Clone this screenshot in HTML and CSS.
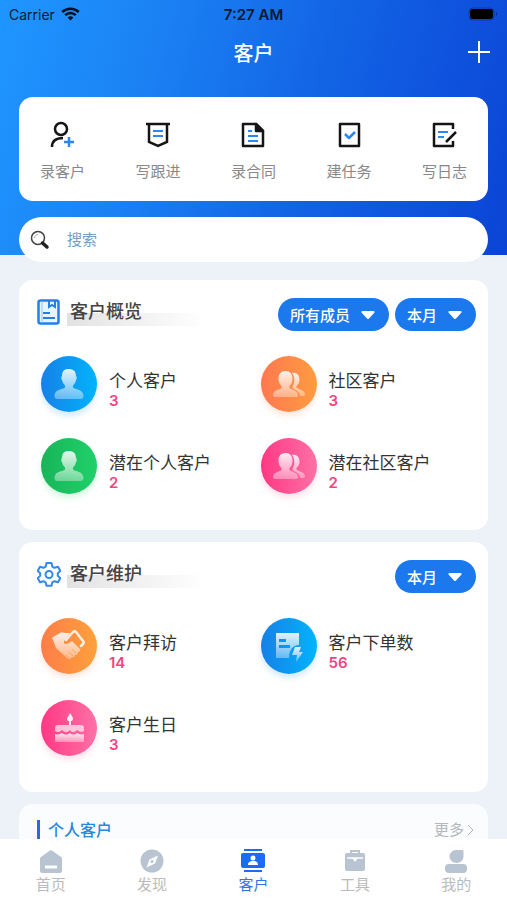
FILE: index.html
```html
<!DOCTYPE html>
<html lang="zh-CN">
<head>
  <meta charset="UTF-8">
  <meta name="viewport" content="width=device-width, initial-scale=1.0">
  <title>客户</title>
  <link rel="stylesheet" href="styles.css">
</head>
<body>
  <!-- shared icon shapes and gradients -->
  <svg class="defs" width="0" height="0" aria-hidden="true">
    <defs>
      <linearGradient id="fade" x1="0" y1="0" x2="0" y2="1">
        <stop offset="0" stop-color="#fff" stop-opacity=".88"/>
        <stop offset="1" stop-color="#fff" stop-opacity=".35"/>
      </linearGradient>
      <symbol id="person" viewBox="0 0 56 56">
        <path fill="url(#fade)" d="M27.500 13c5 0 7.500 2.500 7.500 7 1 .5 1 3.500 0 4-.5 2.500-1.500 4-3 5.500v2c2 2 10.500 1.500 10.500 8.500 0 2-1 3-3 3h-23c-2 0-3-1-3-3 0-7 8.500-6.500 10.500-8.500v-2c-1.500-1.500-2.500-3-3-5.500-1-.5-1-3.500 0-4 0-4.500 2-7 6.500-7z"/>
      </symbol>
      <symbol id="people" viewBox="0 0 56 56">
        <path fill="url(#fade)" d="M24.500 15c4.500 0 7 3 7 7.500 0 3.500-1 5.500-3 7.500v2c2 2 8.500 2 8.500 7 0 1.500-1 2-2 2H14c-1 0-2-.5-2-2 0-5 6.500-5 8.500-7v-2c-2-2-3-4-3-7.500 0-4.500 2.500-7.500 7-7.500z"/>
        <path fill="url(#fade)" d="M31 17c4-1 7.500 1.500 7.500 6.500 0 3-1 4.500-3 6.500v1.500c2 2 8.500 2.500 8.500 6.500 0 1.500-1 2-2 2h-3c0-5-5-6-7.500-8v-1.500c2.500-4 2.500-10-.5-13.500z"/>
      </symbol>
      <symbol id="caret" viewBox="0 0 14 9">
        <path fill="currentColor" d="M1.500 0h11c1 0 1.500 1 .8 1.700L8 7.500c-.6.700-1.400.700-2 0L.7 1.700C0 1 .5 0 1.500 0z"/>
      </symbol>
    </defs>
  </svg>

  <div class="app">
    <main class="content">
      <header class="hero">
        <div class="status-bar">
          <span class="carrier">Carrier
            <svg width="19" height="14" viewBox="0 0 19 14" fill="none" stroke="#0a0f1c" stroke-width="2.500">
              <path d="M1.200 5c4.600-4.400 12-4.400 16.600 0"/>
              <path d="M4.200 8.200c3-2.900 7.600-2.900 10.600 0"/>
              <path d="M6.600 10.500c1.700-1.600 4.100-1.600 5.800 0L9.500 13.500z" fill="#0a0f1c" stroke="none"/>
            </svg>
          </span>
          <span class="time">7:27 AM</span>
          <svg class="battery" width="30" height="14" viewBox="0 0 30 14">
            <rect x="1" y="1" width="25" height="12" rx="4" fill="none" stroke="#0b2f8c" stroke-opacity=".7"/>
            <rect x="2" y="2" width="23" height="10" rx="3" fill="#000"/>
            <path d="M28 5c1.500.5 1.500 3.500 0 4z" fill="#0b2f8c"/>
          </svg>
        </div>

        <div class="title-bar">
          <h1>客户</h1>
          <button class="add-button" type="button" aria-label="新增">
            <svg width="22" height="22" viewBox="0 0 22 22" stroke="#fff" stroke-width="2"><path d="M0 11h22M11 0v22"/></svg>
          </button>
        </div>

        <nav class="quick-actions">
          <button type="button">
            <svg width="28" height="28" viewBox="0 0 28 28" fill="none" stroke="#151515" stroke-width="2.500">
              <circle cx="12" cy="8" r="6"/>
              <path d="M3 26c0-6 4-9 11-9"/>
              <path d="M20 16v10M15 21h10" stroke="#2c86f3"/>
            </svg>
            <span>录客户</span>
          </button>
          <button type="button">
            <svg width="28" height="28" viewBox="0 0 28 28" fill="none" stroke="#151515" stroke-width="2.500">
              <path d="M2 3h24M5 3v18l9 4 9-4V3"/>
              <path d="M9 10h10M9 15h10" stroke="#2c86f3" stroke-width="2"/>
            </svg>
            <span>写跟进</span>
          </button>
          <button type="button">
            <svg width="28" height="28" viewBox="0 0 28 28" fill="none" stroke="#151515" stroke-width="2.500" stroke-linejoin="round">
              <path d="M4 3h13l7 7v15H4z"/>
              <path d="M17 3v7h7z" fill="#151515"/>
              <path d="M9 10h4M9 15h10M9 20h10" stroke="#2c86f3" stroke-width="2"/>
            </svg>
            <span>录合同</span>
          </button>
          <button type="button">
            <svg width="28" height="28" viewBox="0 0 28 28" fill="none" stroke="#151515" stroke-width="2.500" stroke-linejoin="round">
              <path d="M5 3h19v22H5z"/>
              <path d="M10 13l4 4 6-6" stroke="#2c86f3"/>
            </svg>
            <span>建任务</span>
          </button>
          <button type="button">
            <svg width="28" height="28" viewBox="0 0 28 28" fill="none" stroke="#151515" stroke-width="2.500" stroke-linejoin="round">
              <path d="M23 8V3H4v22h19v-5"/>
              <path d="M8 11h10M8 16h6" stroke="#2c86f3" stroke-width="2"/>
              <path d="M16 21l10-10"/>
            </svg>
            <span>写日志</span>
          </button>
        </nav>

        <label class="search">
          <svg width="20" height="20" viewBox="0 0 20 20" fill="none">
            <circle cx="8" cy="8" r="6.500" stroke="#444" stroke-width="1.500"/>
            <path d="M4.500 8c0-2 1.500-3.500 3.500-3.500" stroke="#aaa"/>
            <path d="M12.500 13l4.500 4" stroke="#222" stroke-width="3.500" stroke-linecap="round"/>
          </svg>
          <input type="search" placeholder="搜索" aria-label="搜索">
        </label>
      </header>

      <section class="card">
        <div class="card-head">
          <svg class="head-icon" width="24" height="26" viewBox="0 0 24 26" fill="none" stroke="#237fea" stroke-width="2">
            <rect x="1.500" y="1.500" width="20" height="23" rx="2" fill="#e8f5ff" stroke-width="2.500"/>
            <path d="M5 2v22" stroke="#8cc4fb" stroke-width="1"/>
            <path d="M12 2v6l3-2 3 2V2"/>
            <path d="M6 14h7M6 19h12"/>
          </svg>
          <h2>客户概览</h2>
          <div class="filters">
            <label class="pill">
              <select aria-label="成员"><option>所有成员</option></select>
              <svg width="14" height="9"><use href="#caret"/></svg>
            </label>
            <label class="pill">
              <select aria-label="时间"><option>本月</option></select>
              <svg width="14" height="9"><use href="#caret"/></svg>
            </label>
          </div>
        </div>
        <div class="stats">
          <a class="stat" href="#">
            <svg class="stat-icon blue"><use href="#person"/></svg>
            <span class="stat-text">个人客户<strong>3</strong></span>
          </a>
          <a class="stat" href="#">
            <svg class="stat-icon orange"><use href="#people"/></svg>
            <span class="stat-text">社区客户<strong>3</strong></span>
          </a>
          <a class="stat" href="#">
            <svg class="stat-icon green"><use href="#person"/></svg>
            <span class="stat-text">潜在个人客户<strong>2</strong></span>
          </a>
          <a class="stat" href="#">
            <svg class="stat-icon pink"><use href="#people"/></svg>
            <span class="stat-text">潜在社区客户<strong>2</strong></span>
          </a>
        </div>
      </section>

      <section class="card">
        <div class="card-head">
          <svg class="head-icon" width="24" height="26" viewBox="0 0 24 26" fill="none" stroke="#3288ee" stroke-width="2" stroke-linejoin="round">
            <path d="M9.500 2h5l.8 3.600 2.200 1.200L21 5.700l2.300 4.200-2.500 2.400v2.400l2.500 2.400-2.300 4.200-3.500-1.100-2.200 1.200-.8 3.300h-5l-.8-3.300-2.200-1.200L3 21.300.7 17.100l2.500-2.400v-2.400L.7 9.900 3 5.700l3.500 1.100 2.200-1.200z"/>
            <circle cx="12" cy="13.500" r="3.500"/>
          </svg>
          <h2>客户维护</h2>
          <div class="filters">
            <label class="pill">
              <select aria-label="时间"><option>本月</option></select>
              <svg width="14" height="9"><use href="#caret"/></svg>
            </label>
          </div>
        </div>
        <div class="stats">
          <a class="stat" href="#">
            <svg class="stat-icon amber" viewBox="0 0 56 56">
              <path fill="url(#fade)" d="M12 22c-1-1-1-2 0-3l7-4c2-1 4 0 6 0h4l-6 8c-1 3 2 4 5 2l3-2 8 8c1 1 0 3-2 3 0 2-1 3-3 3 0 2-2 3-3 2-1 2-3 3-5 1L15 30z"/>
              <path d="M25 22l7-8c1-1 2-1 3 0l7 9c1 1 1 2 0 3l-2 2" fill="none" stroke="#fff" stroke-opacity=".85" stroke-width="2.500" stroke-linecap="round"/>
              <path d="M28 40l-3-3M32 38l-4-4M35 35l-4-4" stroke="#ff9145" stroke-width="1" stroke-opacity=".6"/>
            </svg>
            <span class="stat-text">客户拜访<strong>14</strong></span>
          </a>
          <a class="stat" href="#">
            <svg class="stat-icon blue" viewBox="0 0 56 56">
              <path fill="url(#fade)" fill-rule="evenodd" d="M16 15h21c1 0 1 0 1 1v11c-6 0-10 5-10 13H16c-1 0-1 0-1-1V16c0-1 0-1 1-1zm2 6v3h7v-3zm0 6v3h11v-3z"/>
              <path fill="url(#fade)" d="M34 29h6l-2 5h4l-7 10 1-7h-5z"/>
            </svg>
            <span class="stat-text">客户下单数<strong>56</strong></span>
          </a>
          <a class="stat" href="#">
            <svg class="stat-icon pink" viewBox="0 0 56 56">
              <path fill="#fff" fill-opacity=".9" d="M29 13c2 3 3 4 3 6 0 3-6 3-6 0 0-2 2-3 3-6zM28 21h2v4h-2z"/>
              <path fill="#fff" fill-opacity=".65" d="M17 25h23c2 0 3 1 3 3v3c-3 2-5 0-7-1-3 3-5 3-7 0-3 3-5 3-8 0-2 2-4 3-7 1v-3c0-2 1-3 3-3z"/>
              <path fill="url(#fade)" d="M14 34c3 1 5 0 7-1 3 2 5 2 8 0 2 2 5 2 7 0 2 1 4 2 7 1v8H14z"/>
            </svg>
            <span class="stat-text">客户生日<strong>3</strong></span>
          </a>
        </div>
      </section>

      <section class="card list-card">
        <h3>个人客户</h3>
        <a class="more" href="#">更多
          <svg width="6" height="12" viewBox="0 0 6 12" fill="none" stroke="#b4b8bc"><path d="M0 1l5 5-5 5"/></svg>
        </a>
      </section>
    </main>

    <nav class="tab-bar">
      <a href="#">
        <svg width="24" height="26" viewBox="0 0 24 26">
          <path fill="#b8c4d1" d="M11 2.500c.7-.5 1.300-.5 2 0l9 6.500c1 .7 1 1 1 2v12c0 1-1 2-2 2H3c-1 0-2-1-2-2V11c0-1 0-1.300 1-2z"/>
          <path stroke="#fff" stroke-width="3" d="M6 19h12"/>
        </svg>
        <span>首页</span>
      </a>
      <a href="#">
        <svg width="24" height="26" viewBox="0 0 24 26">
          <circle cx="12" cy="13" r="11.500" fill="#b8c4d1"/>
          <path fill="#fff" d="M18 7.500l-3 8-8.500 4 3-8z"/>
          <circle cx="12" cy="13.500" r="1.500" fill="#b8c4d1"/>
        </svg>
        <span>发现</span>
      </a>
      <a class="active" href="#" aria-current="page">
        <svg width="24" height="26" viewBox="0 0 24 26" fill="#1b6bf8">
          <path d="M3 1h18v2H3zM3 22h18v2H3z"/>
          <rect x="0" y="5" width="24" height="15" rx="2"/>
          <circle cx="12" cy="10" r="2.500" fill="#fff"/>
          <path fill="#fff" d="M7 17c0-3 2-4 5-4s5 1 5 4z"/>
        </svg>
        <span>客户</span>
      </a>
      <a href="#">
        <svg width="24" height="26" viewBox="0 0 24 26">
          <path d="M8 6V3h8v3" fill="none" stroke="#b8c4d1" stroke-width="2"/>
          <rect x="2" y="5" width="20" height="18" rx="2" fill="#b8c4d1"/>
          <path d="M4 10h16" stroke="#fff" stroke-width="1.500"/>
          <path d="M9 10l3 4 3-4z" fill="#fff"/>
        </svg>
        <span>工具</span>
      </a>
      <a href="#">
        <svg width="24" height="26" viewBox="0 0 24 26" fill="#b8c4d1">
          <path d="M12 2h6c1 0 1.500.5 1.500 1.500V8c0 4-3 7-7 7s-7-3-7-6.500S8.500 2 12 2z"/>
          <rect x="1" y="16" width="22" height="9" rx="4"/>
        </svg>
        <span>我的</span>
      </a>
    </nav>
  </div>
</body>
</html>
```

FILE: styles.css
```css
* {
  box-sizing: border-box;
}

body {
  margin: 0;
  font-family: 'Inter', 'Noto Sans CJK SC', sans-serif;
  font-size: 15px;
  color: #333;
  background-color: #edf2f8;
}

a {
  color: inherit;
  text-decoration: none;
}

button,
input,
select {
  font-family: inherit;
  font-size: inherit;
  border: none;
  background: none;
  padding: 0;
}

h1,
h2,
h3 {
  margin: 0;
  font-weight: 500;
}

.defs {
  position: absolute;
}

.app {
  display: flex;
  flex-direction: column;
  height: 100vh;
}

.content {
  flex: 1;
  min-height: 0;
  overflow-y: auto;
  scrollbar-width: none;
}

/* Blue top area */
.hero {
  padding: 0 19px;
  margin-bottom: 25px;
  background: linear-gradient(105deg, #1f96ff 0%, #1b82f4 28%, #1262e4 62%, #0b44d6 100%);
}

.status-bar {
  display: grid;
  grid-template-columns: 1fr auto 1fr;
  align-items: center;
  height: 28px;
  margin: 0 -10px;
  font-size: 14px;
  color: #0a1830;
}

.carrier {
  display: flex;
  align-items: center;
  gap: 6px;
}

.time {
  font-size: 15px;
  font-weight: 600;
}

.battery {
  justify-self: end;
}

.title-bar {
  display: grid;
  grid-template-columns: 1fr auto 1fr;
  align-items: center;
  height: 48px;
  margin-bottom: 21px;
  color: #fff;
}

.title-bar h1 {
  grid-column: 2;
  font-size: 20px;
}

.add-button {
  display: flex;
  justify-self: end;
  margin-right: -2px;
  cursor: pointer;
}

.quick-actions {
  display: flex;
  justify-content: space-between;
  padding: 24px 21px 18px;
  margin-bottom: 16px;
  border-radius: 14px;
  background-color: #fff;
}

.quick-actions button {
  display: flex;
  flex-direction: column;
  align-items: center;
  gap: 12px;
  line-height: 22px;
  color: #888;
  cursor: pointer;
}

.search {
  display: flex;
  align-items: center;
  gap: 17px;
  height: 45px;
  padding: 0 11px;
  border-radius: 23px;
  background-color: #fff;
  /* hangs over the lower edge of the blue area */
  position: relative;
  top: 7px;
  margin-top: -7px;
}

.search input {
  flex: 1;
  min-width: 0;
  outline: none;
}

.search input::placeholder {
  color: #769cc8;
}

/* Cards */
.card {
  margin: 0 19px 12px;
  padding: 18px 0 36px;
  border-radius: 14px;
  background-color: #fff;
}

.card-head {
  display: flex;
  align-items: flex-start;
  padding: 0 12px 0 18px;
  margin-bottom: 25px;
}

.head-icon {
  margin: 1px 6px 0 0;
}

.card-head h2 {
  width: 138px;
  padding-left: 3px;
  font-size: 18px;
  line-height: 28px;
  color: #444;
  background: linear-gradient(90deg, #e2e2e2, #fff) 0 100% / 100% 13px no-repeat;
}

.filters {
  display: flex;
  gap: 6px;
  margin-left: auto;
}

.pill {
  position: relative;
  display: flex;
  border-radius: 17px;
  color: #fff;
  background-color: #1b78ed;
}

.pill select {
  appearance: none;
  height: 33px;
  padding: 2px 38px 0 12px;
  color: #fff;
  font-weight: 500;
  cursor: pointer;
}

.pill option {
  color: #333;
}

.pill svg {
  position: absolute;
  top: 13px;
  right: 14px;
  pointer-events: none;
}

.stats {
  display: grid;
  grid-template-columns: 1fr 1fr;
  row-gap: 26px;
  padding: 0 8px 0 22px;
}

.stat {
  display: flex;
  align-items: center;
  gap: 12px;
}

.stat-icon {
  width: 56px;
  height: 56px;
  border-radius: 50%;
}

.blue {
  background: linear-gradient(90deg, #1680e8, #02b4fb);
  box-shadow: 0 4px 6px #d3e9ff;
}

.orange {
  background: linear-gradient(90deg, #ff7850, #ff9c40);
  box-shadow: 0 4px 6px #ffe6dc;
}

.amber {
  background: linear-gradient(90deg, #fd7d49, #fda13b);
  box-shadow: 0 4px 6px #ffe6dc;
}

.green {
  background: linear-gradient(90deg, #18b558, #20d06a);
  box-shadow: 0 4px 6px #d3f8df;
}

.pink {
  background: linear-gradient(90deg, #ff3884, #ff71a6);
  box-shadow: 0 4px 6px #ffe0eb;
}

.stat-text {
  padding-top: 11px;
  font-size: 17px;
  line-height: 22px;
}

.stat-text strong {
  display: block;
  font-size: 15px;
  font-weight: 600;
  line-height: 18px;
  color: #f4437f;
}

.list-card {
  display: flex;
  justify-content: space-between;
  align-items: center;
  padding: 16px 14px 36px 18px;
  margin-bottom: 0;
  background-color: #fafcfe;
}

.list-card h3 {
  padding-left: 8px;
  border-left: 3px solid #2d68e0;
  font-size: 16px;
  line-height: 20px;
  color: #2488e0;
}

.more {
  display: flex;
  align-items: center;
  gap: 4px;
  line-height: 20px;
  color: #b4b8bc;
}

/* Bottom navigation */
.tab-bar {
  display: grid;
  grid-template-columns: repeat(5, 1fr);
  height: 61px;
  padding-top: 9px;
  background-color: #fff;
}

.tab-bar a {
  display: flex;
  flex-direction: column;
  align-items: center;
  line-height: 22px;
  color: #bbb;
}

.tab-bar .active {
  color: #2f74ee;
}
```
